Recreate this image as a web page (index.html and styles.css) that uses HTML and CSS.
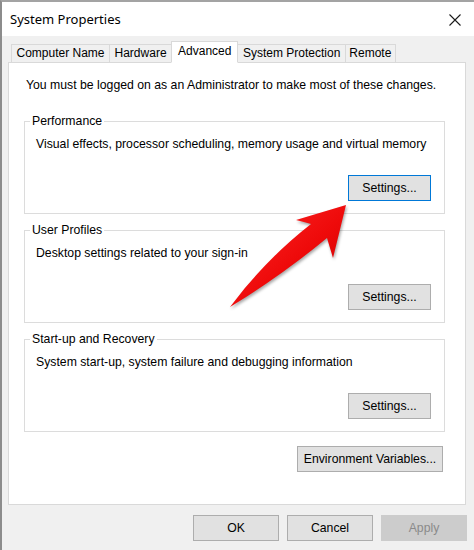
FILE: index.html
```html
<!DOCTYPE html>
<html lang="en">
<head>
<meta charset="utf-8">
<title>System Properties</title>
<link rel="stylesheet" href="styles.css">
</head>
<body>
<div class="window">
  <div class="titlebar">
    <span class="title">System Properties</span>
    <svg class="close" width="12" height="12" viewBox="0 0 12 12">
      <path d="M0.5 0.5 L11.5 11.5 M11.5 0.5 L0.5 11.5" stroke="#1a1a1a" stroke-width="1.1" fill="none"/>
    </svg>
  </div>
  <div class="client">
    <div class="tabs">
      <div class="tab">Computer Name</div>
      <div class="tab">Hardware</div>
      <div class="tab active">Advanced</div>
      <div class="tab">System Protection</div>
      <div class="tab">Remote</div>
    </div>
    <div class="panel">
      <p class="note">You must be logged on as an Administrator to make most of these changes.</p>

      <fieldset class="group">
        <legend>Performance</legend>
        <p class="desc">Visual effects, processor scheduling, memory usage and virtual memory</p>
        <div class="actions"><button class="btn default">Settings...</button></div>
      </fieldset>

      <fieldset class="group">
        <legend>User Profiles</legend>
        <p class="desc">Desktop settings related to your sign-in</p>
        <div class="actions"><button class="btn">Settings...</button></div>
      </fieldset>

      <fieldset class="group">
        <legend>Start-up and Recovery</legend>
        <p class="desc">System start-up, system failure and debugging information</p>
        <div class="actions"><button class="btn">Settings...</button></div>
      </fieldset>

      <div class="env"><button class="btn env-btn">Environment Variables...</button></div>
    </div>
    <div class="footer">
      <button class="btn dlg">OK</button>
      <button class="btn dlg">Cancel</button>
      <button class="btn dlg" disabled>Apply</button>
    </div>
  </div>

  <!-- callout arrow pointing at the Performance settings button -->
  <svg class="arrow" width="474" height="550" viewBox="0 0 474 550">
    <defs>
      <linearGradient id="arrowFill" x1="0" y1="0" x2="1" y2="1">
        <stop offset="0" stop-color="#ff2a2a"/>
        <stop offset="0.55" stop-color="#ee0a0a"/>
        <stop offset="1" stop-color="#c80000"/>
      </linearGradient>
    </defs>
    <path d="M346 205 L296 220 Q304 222 311 224 Q266 259 230 307 Q281 276 327 238 L333 258 Z" fill="url(#arrowFill)"/>
  </svg>
</div>
</body>
</html>
```
FILE: styles.css
```css
* {
  box-sizing: border-box;
}

html, body {
  margin: 0;
  padding: 0;
}

body {
  width: 474px;
  height: 550px;
  overflow: hidden;
  font-family: "Liberation Sans", Arial, sans-serif;
  font-size: 12.25px;
  color: #000;
  background: #f0f0f0;
}

.window {
  position: relative;
  width: 474px;
  height: 550px;
  border-top: 2px solid #a3a3a3;
  border-left: 2px solid #8c8c8c;
  background: #f0f0f0;
  display: flex;
  flex-direction: column;
}

/* title bar */
.titlebar {
  height: 34px;
  background: #fff;
  display: flex;
  align-items: center;
  justify-content: space-between;
  padding: 0 13px 0 8px;
}

.title {
  font-family: "Noto Sans", "Open Sans", sans-serif;
  font-size: 13px;
  color: #000;
  margin-top: -1px;
}

.close {
  display: block;
  margin-top: 1px;
}

/* dialog client area */
.client {
  flex: 1;
  display: flex;
  flex-direction: column;
}

.tabs {
  display: flex;
  align-items: flex-end;
  height: 27px;
  padding-left: 9px;
  margin-bottom: -1px;
  position: relative;
  z-index: 1;
  font-size: 12px;
}

.tab {
  height: 19px;
  line-height: 17px;
  padding: 0 4.5px;
  border: 1px solid #d9d9d9;
  border-right: none;
  background: #f0f0f0;
  white-space: nowrap;
}

.tab:nth-child(5) {
  border-right: 1px solid #d9d9d9;
  padding: 0 3.5px;
}

.tab.active {
  height: 22px;
  line-height: 18px;
  padding: 0 6px;
  background: #fff;
  border: 1px solid #d9d9d9;
  border-bottom: 1px solid #fff;
}

.tab.active + .tab {
  border-left: none;
}

.panel {
  margin-left: 6px;
  width: 458px;
  height: 443px;
  background: #fff;
  border: 1px solid #d9d9d9;
  padding: 15px 20px 0 15px;
}

.note {
  margin: 0 0 21px 2px;
  line-height: 15px;
}

.group {
  margin: 0 0 9px 0;
  padding: 0 13px 12px 11px;
  border: 1px solid #dcdcdc;
  min-width: 0;
}

.group legend {
  margin-left: -6px;
  padding: 0 2px;
  line-height: 15px;
}

.desc {
  margin: 8px 0 0 0;
  line-height: 15px;
}

.actions {
  display: flex;
  justify-content: flex-end;
  margin-top: 23px;
}

.btn {
  font-family: "Liberation Sans", Arial, sans-serif;
  font-size: 12.25px;
  color: #000;
  height: 26px;
  background: #e1e1e1;
  border: 1px solid #adadad;
  padding: 0;
  margin: 0;
}

.group .btn {
  width: 83px;
}

.btn.default {
  border-color: #0078d7;
}

.env {
  display: flex;
  justify-content: flex-end;
  margin-top: 14px;
  padding-right: 2px;
}

.env-btn {
  width: 146px;
}

.footer {
  display: flex;
  justify-content: flex-end;
  gap: 8px;
  padding: 10px 7px 0 0;
}

.btn.dlg {
  width: 86px;
  height: 26px;
}

.btn:disabled {
  background: #cccccc;
  border-color: #cccccc;
  color: #8a8a8a;
}

.arrow {
  position: absolute;
  left: -2px;
  top: -2px;
  pointer-events: none;
  filter: drop-shadow(1px 2px 1.5px rgba(0, 0, 0, 0.35));
}
```
